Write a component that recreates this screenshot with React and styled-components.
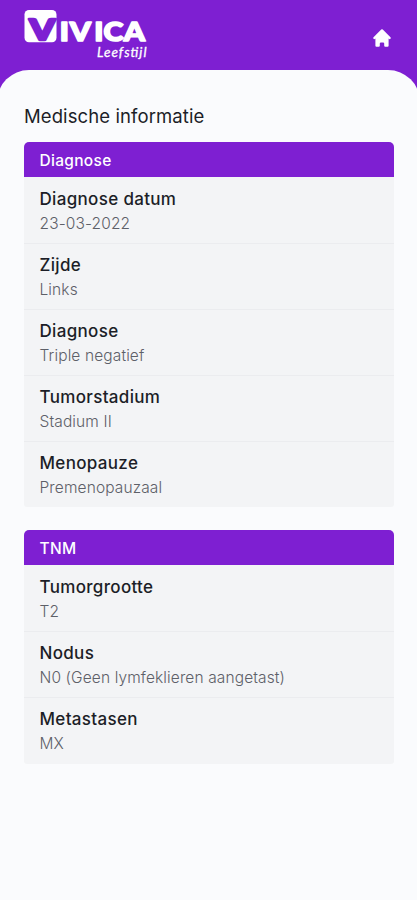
import React from "react";
import styled, { createGlobalStyle } from "styled-components";

const COLORS = {
  PURPLE: "#7e1fd2",
  WHITE: "#ffffff",
  PAGE: "#fafbfd",
  CARD: "#f3f4f6",
  LINE: "#ebecef",
  TEXT: "#1c1e27",
  MUTED: "#5d6068",
};

const GlobalStyle = createGlobalStyle`
  * {
    box-sizing: border-box;
  }
  body {
    margin: 0;
    background-color: ${COLORS.PURPLE};
    font-family: Inter, "Liberation Sans", sans-serif;
  }
`;

const Screen = styled.div`
  display: flex;
  flex-direction: column;
  height: 900px;
  overflow: hidden;
`;

const Header = styled.header`
  display: flex;
  justify-content: space-between;
  flex: none;
  height: 70px;
  padding: 0 24px;
  background-color: ${COLORS.PURPLE};
`;

const HomeButton = styled.button`
  align-self: flex-start;
  display: flex;
  margin-top: 27px;
  padding: 0;
  border: 0;
  background: none;
`;

const Content = styled.main`
  flex: 1;
  margin: 0 -3px;
  padding: 36px 26px 0 27px;
  border-radius: 32px 32px 0 0;
  background-color: ${COLORS.PAGE};
`;

const Title = styled.h1`
  margin: 0 0 16px;
  color: ${COLORS.TEXT};
  font-size: 18.5px;
  font-weight: 400;
  line-height: 20px;
  letter-spacing: 0.1px;
`;

const Card = styled.section`
  margin-bottom: 22.8px;
  overflow: hidden;
  border-radius: 5px 5px 3px 3px;
  background-color: ${COLORS.CARD};
`;

const CardHeader = styled.h2`
  height: 35px;
  margin: 0;
  padding: 0 15.5px;
  background-color: ${COLORS.PURPLE};
  color: ${COLORS.WHITE};
  font-size: 15.5px;
  font-weight: 500;
  line-height: 37px;
  letter-spacing: 0.3px;
`;

const Row = styled.div`
  height: 66.1px;
  padding: 9.5px 15.5px 0;

  & + & {
    border-top: 1px solid ${COLORS.LINE};
    padding-top: 8.5px;
  }
`;

const Label = styled.div`
  color: ${COLORS.TEXT};
  font-size: 17px;
  font-weight: 500;
  line-height: 25px;
  letter-spacing: 0.33px;
`;

const Value = styled.div`
  color: ${COLORS.MUTED};
  font-size: 15.5px;
  font-weight: 300;
  line-height: 23px;
  letter-spacing: 0.12px;
`;

const SECTIONS = [
  {
    title: "Diagnose",
    rows: [
      { label: "Diagnose datum", value: "23-03-2022" },
      { label: "Zijde", value: "Links" },
      { label: "Diagnose", value: "Triple negatief" },
      { label: "Tumorstadium", value: "Stadium II" },
      { label: "Menopauze", value: "Premenopauzaal" },
    ],
  },
  {
    title: "TNM",
    rows: [
      { label: "Tumorgrootte", value: "T2" },
      { label: "Nodus", value: "N0 (Geen lymfeklieren aangetast)" },
      { label: "Metastasen", value: "MX" },
    ],
  },
];

const Logo = () => (
  <svg width="126" height="64" viewBox="24 0 126 64">
    <rect x="24.5" y="10" width="32" height="32.3" rx="4.5" fill={COLORS.WHITE} />
    <g fontFamily="Lato" fontWeight="900" strokeLinejoin="round">
      <text
        x="29.5"
        y="39.5"
        fontSize="29"
        textLength="25.5"
        lengthAdjust="spacingAndGlyphs"
        fill={COLORS.PURPLE}
        stroke={COLORS.PURPLE}
        strokeWidth="2.6"
      >
        V
      </text>
      <text
        transform="translate(60 41.2) scale(1.16 1)"
        x="-0.2 8.4 29.6 37.6 54.9"
        y="0"
        fontSize="26"
        fill={COLORS.WHITE}
        stroke={COLORS.WHITE}
        strokeWidth="1.6"
      >
        IVICA
      </text>
    </g>
    <text
      x="97"
      y="56.5"
      fontFamily="Lato"
      fontSize="13.5"
      fontStyle="italic"
      fontWeight="400"
      textLength="49.5"
      lengthAdjust="spacing"
      fill={COLORS.WHITE}
      stroke={COLORS.WHITE}
      strokeWidth="0.3"
    >
      Leefstijl
    </text>
  </svg>
);

const HomeIcon = () => (
  <svg width="22" height="22" viewBox="0 0 20 20" fill={COLORS.WHITE}>
    <path d="M10.707 2.293a1 1 0 00-1.414 0l-7 7a1 1 0 001.414 1.414L4 10.414V17a1 1 0 001 1h2a1 1 0 001-1v-2a1 1 0 011-1h2a1 1 0 011 1v2a1 1 0 001 1h2a1 1 0 001-1v-6.586l.293.293a1 1 0 001.414-1.414l-7-7z" />
  </svg>
);

const App = () => {
  return (
    <>
      <GlobalStyle />
      <Screen>
        <Header>
          <Logo />
          <HomeButton aria-label="Home">
            <HomeIcon />
          </HomeButton>
        </Header>
        <Content>
          <Title>Medische informatie</Title>
          {SECTIONS.map(({ title, rows }) => (
            <Card key={title}>
              <CardHeader>{title}</CardHeader>
              {rows.map(({ label, value }) => (
                <Row key={label}>
                  <Label>{label}</Label>
                  <Value>{value}</Value>
                </Row>
              ))}
            </Card>
          ))}
        </Content>
      </Screen>
    </>
  );
};

export default App;
